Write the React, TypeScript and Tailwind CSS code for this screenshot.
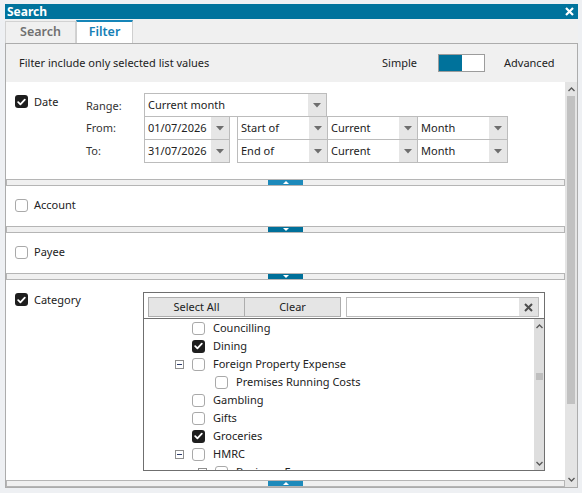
import React from "react";

const font = "font-['Noto_Sans','DejaVu_Sans',sans-serif]";

function Check({ checked }: { checked?: boolean }) {
  if (checked) {
    return (
      <div className="w-[13px] h-[13px] rounded-[3px] bg-[#1e1e1e] flex items-center justify-center shrink-0">
        <svg width="9" height="8" viewBox="0 0 9 8">
          <path d="M1.2 4.2 L3.4 6.3 L7.8 1.6" stroke="white" strokeWidth="1.8" fill="none" strokeLinecap="round" strokeLinejoin="round" />
        </svg>
      </div>
    );
  }
  return <div className="w-[13px] h-[13px] rounded-[3px] border border-[#a9a9a9] bg-white shrink-0" />;
}

function Arrow() {
  return (
    <svg width="8" height="5" viewBox="0 0 8 5">
      <path d="M0 0 L8 0 L4 4.5 Z" fill="#6e6e6e" />
    </svg>
  );
}

function Select({ value, w, className = "" }: { value: string; w: string; className?: string }) {
  return (
    <div className={`flex h-[24px] border border-[#bcbcbc] bg-white ${w} ${className}`}>
      <div className="flex-1 flex items-center pl-[3px] text-[11px] text-[#222] whitespace-nowrap overflow-hidden">{value}</div>
      <div className="w-[18px] bg-[#e6e6e6] flex items-center justify-center">
        <Arrow />
      </div>
    </div>
  );
}

function Splitter({ up, light }: { up?: boolean; light?: boolean }) {
  return (
    <div className="h-[7px] border border-[#b5b5b5] bg-[#f0f0f0] flex justify-center shrink-0">
      <div className={`w-[35px] h-full flex items-center justify-center ${light ? "bg-[#1d8abb]" : "bg-[#00709a]"}`}>
        <svg width="6" height="3" viewBox="0 0 6 3">
          {up ? <path d="M0 3 L6 3 L3 0 Z" fill="white" /> : <path d="M0 0 L6 0 L3 3 Z" fill="white" />}
        </svg>
      </div>
    </div>
  );
}

function Chevron({ up }: { up?: boolean }) {
  return (
    <svg width="7" height="5" viewBox="0 0 7 5">
      <polyline points={up ? "0.5,4 3.5,1 6.5,4" : "0.5,1 3.5,4 6.5,1"} stroke="#5a5a5a" strokeWidth="1.4" fill="none" />
    </svg>
  );
}

function Expander() {
  return (
    <div className="w-[9px] h-[9px] border border-[#8e8e8e] bg-white flex items-center justify-center">
      <div className="w-[5px] h-px bg-[#2d3c6b]" />
    </div>
  );
}

const tree: { label: string; level: number; checked?: boolean; exp?: boolean }[] = [
  { label: "Councilling", level: 0 },
  { label: "Dining", level: 0, checked: true },
  { label: "Foreign Property Expense", level: 0, exp: true },
  { label: "Premises Running Costs", level: 1 },
  { label: "Gambling", level: 0 },
  { label: "Gifts", level: 0 },
  { label: "Groceries", level: 0, checked: true },
  { label: "HMRC", level: 0, exp: true },
  { label: "Business Expense", level: 1, exp: true },
];

export default function App() {
  return (
    <div className={`w-[582px] h-[493px] bg-[#eef0f3] pt-[4px] pl-[5px] pr-[4px] pb-[5px] flex flex-col overflow-hidden ${font}`}>
      {/* Title bar */}
      <div className="h-[15px] bg-[#00739d] flex items-center justify-between pl-[2px] pr-[4px] shrink-0">
        <span className="text-white font-bold text-[12px] leading-none">Search</span>
        <svg width="9" height="9" viewBox="0 0 9 9">
          <path d="M1 1 L8 8 M8 1 L1 8" stroke="white" strokeWidth="2.2" />
        </svg>
      </div>

      {/* Tabs */}
      <div className="h-[24px] flex items-end bg-[#f0f0f0] shrink-0">
        <div className="w-[71px] h-[22px] border border-b-0 border-[#d2d2d2] flex items-center justify-center text-[12.5px] font-semibold text-[#707070]">
          Search
        </div>
        <div className="w-[57px] h-[23px] bg-white border-t-2 border-t-[#1585b8] border-x border-x-[#cfcfcf] flex items-center justify-center text-[12.5px] font-semibold text-[#1580b6]">
          Filter
        </div>
      </div>

      {/* Panel */}
      <div className="flex-1 border border-[#acacac] flex flex-col min-h-0">
        <div className="h-[38px] bg-[#f0f0f0] flex items-center pl-[13px] shrink-0 text-[11px] text-[#222]">
          <span className="w-[363px]">Filter include only selected list values</span>
          <span className="w-[56px]">Simple</span>
          <div className="w-[47px] h-[18px] border border-[#9c9c9c] bg-white flex">
            <div className="w-[23px] h-full bg-[#00729b]" />
          </div>
          <span className="ml-[19px]">Advanced</span>
        </div>

        <div className="flex-1 flex bg-white min-h-0">
          <div className="flex-1 flex flex-col overflow-hidden">
            {/* Date */}
            <div className="flex pl-[9px] pt-[11px] pb-[16px] shrink-0">
              <div className="w-[71px] flex items-start gap-[6px] pt-[2px]">
                <Check checked />
                <span className="text-[11px] leading-[13px] text-[#222]">Date</span>
              </div>
              <div className="flex flex-col text-[11px] text-[#333]">
                <div className="flex h-[24px] items-center">
                  <span className="w-[58px] pt-[3px]">Range:</span>
                  <Select value="Current month" w="w-[183px]" />
                </div>
                <div className="flex h-[24px] items-center -mt-px">
                  <span className="w-[58px]">From:</span>
                  <Select value="01/07/2026" w="w-[86px]" />
                  <Select value="Start of" w="w-[91px]" className="ml-[7px]" />
                  <Select value="Current" w="w-[91px]" className="-ml-px" />
                  <Select value="Month" w="w-[91px]" className="-ml-px" />
                </div>
                <div className="flex h-[24px] items-center -mt-px">
                  <span className="w-[58px]">To:</span>
                  <Select value="31/07/2026" w="w-[86px]" />
                  <Select value="End of" w="w-[91px]" className="ml-[7px]" />
                  <Select value="Current" w="w-[91px]" className="-ml-px" />
                  <Select value="Month" w="w-[91px]" className="-ml-px" />
                </div>
              </div>
            </div>
            <Splitter up light />

            {/* Account */}
            <div className="h-[40px] flex items-center gap-[6px] pl-[9px] pb-px shrink-0 text-[11px] text-[#222]">
              <Check />
              <span>Account</span>
            </div>
            <Splitter />

            {/* Payee */}
            <div className="h-[40px] flex items-center gap-[6px] pl-[9px] pb-px shrink-0 text-[11px] text-[#222]">
              <Check />
              <span>Payee</span>
            </div>
            <Splitter />

            {/* Category */}
            <div className="h-[200px] flex pl-[9px] pt-[12px] shrink-0">
              <div className="w-[128px] flex items-start gap-[6px] pt-[1px]">
                <Check checked />
                <span className="text-[11px] leading-[13px] text-[#222]">Category</span>
              </div>
              <div className="w-[402px] h-[179px] border border-[#6f6f6f] flex flex-col">
                <div className="h-[26px] pt-[4px] px-[4px] flex items-start border-b border-[#6f6f6f] shrink-0 text-[11px] text-[#222]">
                  <div className="w-[97px] h-[20px] border border-[#adadad] bg-[#e5e5e5] flex items-center justify-center">Select All</div>
                  <div className="w-[97px] h-[20px] -ml-px border border-[#adadad] bg-[#e5e5e5] flex items-center justify-center">Clear</div>
                  <div className="ml-[5px] w-[193px] h-[20px] border border-[#bdbdbd] bg-white flex justify-end">
                    <div className="w-[19px] h-full bg-[#e2e2e2] flex items-center justify-center">
                      <svg width="9" height="9" viewBox="0 0 9 9">
                        <path d="M1 1 L8 8 M8 1 L1 8" stroke="#4d4d4d" strokeWidth="2" />
                      </svg>
                    </div>
                  </div>
                </div>
                <div className="flex-1 flex min-h-0">
                  <div className="flex-1 overflow-hidden">
                    {tree.map((t, i) => (
                      <div key={i} className="h-[18px] flex items-center text-[11px] text-[#222]" style={{ paddingLeft: 31 + t.level * 23 }}>
                        <div className="w-[9px] flex items-center">{t.exp && <Expander />}</div>
                        <div className="ml-[8px]">
                          <Check checked={t.checked} />
                        </div>
                        <span className="ml-[8px] whitespace-nowrap">{t.label}</span>
                      </div>
                    ))}
                  </div>
                  <div className="w-[10px] bg-[#dedede] flex flex-col items-center pt-[5px] pb-[4px]">
                    <Chevron up />
                    <div className="mt-[44px] w-[7px] h-[7px] bg-[#bebebe]" />
                    <div className="flex-1" />
                    <Chevron />
                  </div>
                </div>
              </div>
            </div>
            <Splitter up light />
          </div>

          {/* Outer scrollbar */}
          <div className="w-[12px] bg-[#e4e4e4] flex flex-col items-center pt-[5px] pb-[5px] shrink-0">
            <Chevron up />
            <div className="mt-[4px] w-[8px] h-[308px] bg-[#c1c1c1]" />
            <div className="flex-1" />
            <Chevron />
          </div>
        </div>
      </div>
    </div>
  );
}
